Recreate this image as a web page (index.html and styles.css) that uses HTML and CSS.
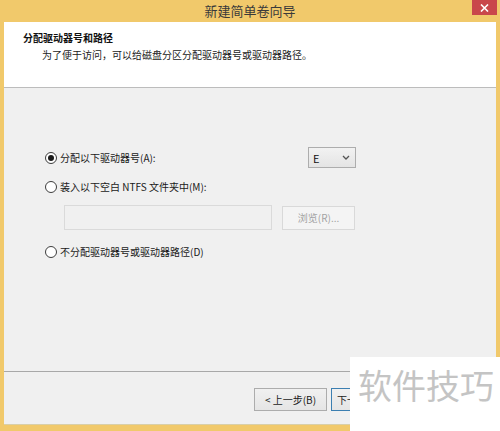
FILE: index.html
```html
<!DOCTYPE html>
<html lang="zh-CN">
<head>
<meta charset="utf-8">
<title>新建简单卷向导</title>
<link rel="stylesheet" href="styles.css">
</head>
<body>
<div class="window">
  <div class="titlebar">
    <span></span>
    <span class="title">新建简单卷向导</span>
    <span class="close"><svg width="9" height="8" viewBox="0 0 9 8"><path d="M1 0.5 L8 7.5 M8 0.5 L1 7.5" stroke="#fff" stroke-width="1.6"/></svg></span>
  </div>
  <div class="client">
    <div class="header">
      <div class="h-title">分配驱动器号和路径</div>
      <div class="h-sub">为了便于访问，可以给磁盘分区分配驱动器号或驱动器路径。</div>
    </div>
    <div class="body">
      <div class="row row1">
        <label class="opt"><span class="radio checked"></span>分配以下驱动器号(A):</label>
        <div class="select"><span>E</span><svg width="8" height="5" viewBox="0 0 8 5"><path d="M1 1 L4 4 L7 1" stroke="#555" stroke-width="1.3" fill="none"/></svg></div>
      </div>
      <div class="row row2">
        <label class="opt"><span class="radio"></span>装入以下空白 NTFS 文件夹中(M):</label>
      </div>
      <div class="row row3">
        <div class="input"></div>
        <div class="btn disabled">浏览(R)...</div>
      </div>
      <div class="row row4">
        <label class="opt"><span class="radio"></span>不分配驱动器号或驱动器路径(D)</label>
      </div>
    </div>
    <div class="footer">
      <div class="btn">&lt; 上一步(B)</div>
      <div class="btn primary"><span class="nxt">下一步</span></div>
    </div>
  </div>
  <div class="watermark">软件技巧</div>
</div>
</body>
</html>
```

FILE: styles.css
```css
* { box-sizing: border-box; }
html, body { margin: 0; padding: 0; }
body {
  width: 500px;
  height: 431px;
  overflow: hidden;
  background: #f1c96b;
  font-family: "Noto Sans CJK SC", "Microsoft YaHei", sans-serif;
  font-size: 10px;
  color: #1a1a1a;
}
.window {
  position: relative;
  width: 500px;
  height: 431px;
  display: flex;
  flex-direction: column;
}
.titlebar {
  height: 22px;
  display: grid;
  grid-template-columns: 1fr auto 1fr;
  align-items: center;
}
.title {
  font-size: 13px;
  line-height: 22px;
  color: #3a3a3a;
}
.close {
  justify-self: end;
  align-self: start;
  width: 25px;
  height: 15px;
  margin-right: 3px;
  background: #c9474b;
  display: flex;
  align-items: center;
  justify-content: center;
}
.client {
  flex: 1;
  margin: 0 4px 6px 4px;
  background: #f0f0f0;
  display: flex;
  flex-direction: column;
  border-bottom: 1px solid #d9cfa8;
}
.header {
  height: 66px;
  background: #fff;
  border-bottom: 1px solid #bcbcbc;
  padding: 8px 0 0 19px;
}
.h-title {
  font-weight: bold;
  line-height: 16px;
  color: #111;
}
.h-sub {
  line-height: 16px;
  margin-top: 1px;
  padding-left: 19px;
  color: #222;
}
.body {
  flex: 1;
  padding: 59px 0 0 41px;
}
.row {
  display: flex;
  align-items: center;
}
.row1 { height: 21px; }
.row2 { height: 16px; margin-top: 11px; }
.row3 { margin-top: 10px; padding-left: 19px; }
.row4 { height: 16px; margin-top: 14px; }
.opt {
  display: flex;
  align-items: center;
  gap: 3px;
  line-height: 16px;
  color: #1a1a1a;
}
.row1 .opt { width: 263px; }
.radio {
  width: 12px;
  height: 12px;
  border: 1px solid #3d3d3d;
  border-radius: 50%;
  background: #fff;
  display: flex;
  align-items: center;
  justify-content: center;
}
.radio.checked::after {
  content: "";
  width: 6px;
  height: 6px;
  border-radius: 50%;
  background: #1a1a1a;
}
.select {
  width: 48px;
  height: 21px;
  border: 1px solid #adadad;
  background: linear-gradient(#f2f2f2, #e4e4e4);
  display: flex;
  align-items: center;
  justify-content: space-between;
  padding: 0 5px 0 4px;
  font-size: 11px;
  color: #111;
}
.input {
  width: 208px;
  height: 25px;
  background: #f0f0f0;
  border: 1px solid #dadada;
}
.btn {
  width: 73px;
  height: 23px;
  border: 1px solid #acacac;
  background: linear-gradient(#f0f0f0, #e5e5e5);
  display: flex;
  align-items: center;
  justify-content: center;
  color: #1a1a1a;
}
.btn.disabled {
  margin-left: 10px;
  height: 24px;
  background: #f4f4f4;
  border-color: #d9d9d9;
  color: #a3a3a3;
}
.btn.primary {
  border-color: #3c7fb1;
  margin-left: 4px;
  justify-content: flex-start;
  padding-left: 5px;
  overflow: hidden;
}
.nxt {
  display: block;
  width: 13px;
  overflow: hidden;
  white-space: nowrap;
}
.footer {
  height: 53px;
  border-top: 1px solid #a8a8a8;
  display: flex;
  align-items: flex-start;
  padding: 16px 0 0 250px;
}
.watermark {
  position: absolute;
  left: 350px;
  top: 357px;
  width: 150px;
  height: 74px;
  background: #fff;
  color: #c4c4c4;
  font-size: 34px;
  line-height: 56px;
  padding-left: 8px;
}
```
